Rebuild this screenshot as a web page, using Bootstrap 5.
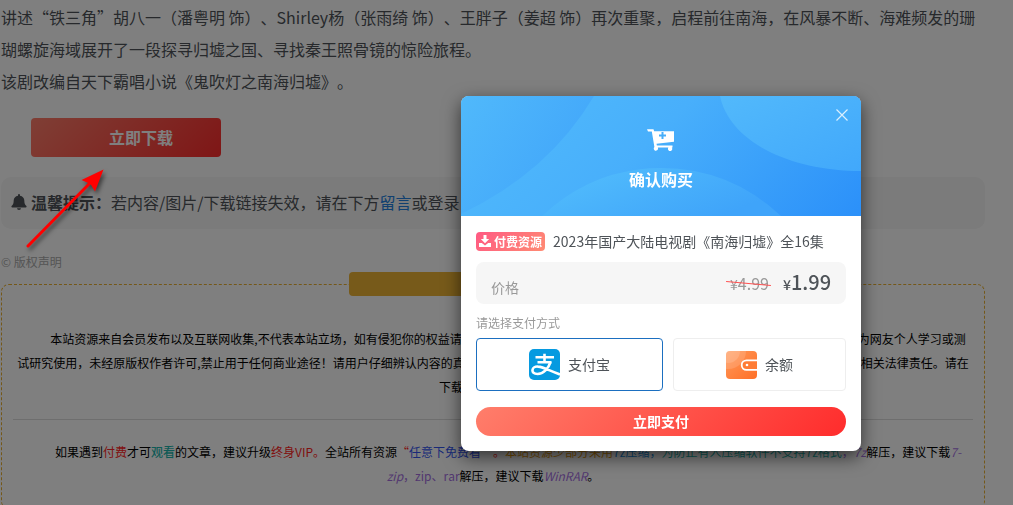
<!DOCTYPE html>
<html lang="zh-CN">
<head>
<meta charset="utf-8">
<meta name="viewport" content="width=device-width, initial-scale=1">
<title>确认购买</title>
<link href="https://cdn.jsdelivr.net/npm/bootstrap@5.3.0/dist/css/bootstrap.min.css" rel="stylesheet">
<style>
  body { font-family: "Noto Sans CJK SC", "Liberation Sans", sans-serif; color: #4e5358; background: #fff; text-spacing-trim: space-all; font-kerning: none; font-feature-settings: "chws" 0, "halt" 0; }
  a { text-decoration: none; }

  /* article */
  .article { padding: 1px 28px 0 1px; }
  .intro { line-height: 32px; margin-bottom: 21px; }
  .btn-download { width: 190px; height: 39px; margin-left: 30px; padding: 0 0 2px 30px; border: 0; border-radius: 4px; color: #fff; font-weight: 700; background: linear-gradient(135deg, #ff7e6b 0%, #ff2c2c 100%); }
  .btn-download:hover { color: #fff; }
  .tip-box { height: 52px; margin-top: 20px; padding: 0 10px 2px; border-radius: 10px; background: #f6f6f6; white-space: nowrap; overflow: hidden; }
  .tip-box a { color: #2280e0; }
  .tip-icon { width: 16px; height: 16px; margin-right: 4px; flex: none; }
  .copy-title { margin-top: 23px; font-size: 12px; line-height: 20px; color: #aaa; }
  .copy-box { position: relative; margin-top: 12px; padding: 42px 15px 20px; border: 1px dashed #eab030; border-radius: 8px; text-align: center; font-size: 12px; line-height: 24px; color: #000; }
  .copy-tag { position: absolute; top: -13px; left: 50%; width: 288px; height: 24px; margin-left: -144px; border-radius: 4px; background: #efb434; }
  .copy-box p { margin: 0; text-indent: 30px; }
  .copy-box hr { margin: 20px -4px; border-color: #ddd; opacity: 1; }
  .c-red { color: #f22; } .c-teal { color: #1fb5ac; } .c-blue { color: #3355f0; }
  .c-orange { color: #e69a12; } .c-sky { color: #1c8fe0; } .c-violet { color: #a56fdf; }

  /* purchase dialog */
  .pay-dialog { max-width: 400px; margin: 96px 15% 0 auto; }
  .pay-dialog .modal-content { border: 0; border-radius: 8px; overflow: hidden; color: #4e5358; box-shadow: 0 6px 18px rgba(0,0,0,.6); }
  .pay-head { position: relative; height: 120px; color: #fff; background: linear-gradient(135deg, #52bcfb 0%, #48affb 45%, #2b90f9 100%); }
  .head-waves { position: absolute; inset: 0; width: 100%; height: 100%; }
  .pay-head .btn-x { position: absolute; top: 9px; right: 9px; width: 20px; height: 20px; padding: 0; border: 0; background: none; color: #fff; line-height: 0; opacity: .8; }
  .cart-icon { margin: 31px 0 16px; }
  .pay-head h5 { margin: 0; font-size: 16px; line-height: 24px; font-weight: 700; }
  .pay-body { padding: 15px; }
  .pay-tag { height: 19px; padding: 0 3px; gap: 3px; border-radius: 4px; font-size: 12px; color: #fff; font-weight: 700; line-height: 19px; background: linear-gradient(135deg, #ff5983, #ff8b73); }
  .pay-name { font-size: 14px; line-height: 20px; }
  .price-box { height: 42px; margin-top: 11px; padding: 0 15px; border-radius: 8px; background: #f6f6f6; }
  .t-muted { color: #999; }
  .old-price { position: relative; font-size: 16px; text-decoration: none; }
  .old-price::after { content: ""; position: absolute; left: -4px; right: -2px; top: 50%; border-top: 1px solid #ff5050; transform: rotate(5deg); }
  .new-price { margin-left: 14px; font-size: 20px; font-weight: 500; line-height: 24px; }
  .yen { font-size: 14px; }
  .pay-hint { margin: 9px 0 5px; font-size: 12px; line-height: 20px; }
  .pay-way { height: 53px; gap: 8px; border: 1px solid #eee; border-radius: 4px; font-size: 14px; cursor: pointer; }
  .btn-check:checked + .pay-way { border-color: #1b6fc0; }
  .btn-pay { height: 29px; margin-top: 16px; padding: 0; border: 0; border-radius: 15px; color: #fff; font-size: 14px; font-weight: 700; background: linear-gradient(135deg, #ff7e6b 0%, #ff2c2c 100%); }
  .btn-pay:hover { color: #fff; }

  .pointer-arrow { position: fixed; left: 20px; top: 160px; width: 100px; height: 96px; z-index: 1070; pointer-events: none; filter: drop-shadow(2px 3px 2px rgba(0,0,0,.5)); }
</style>
</head>
<body class="modal-open overflow-hidden">

<main class="article">
  <div class="intro">讲述“铁三角”胡八一（潘粤明 饰）、Shirley杨（张雨绮 饰）、王胖子（姜超 饰）再次重聚，启程前往南海，在风暴不断、海难频发的珊瑚螺旋海域展开了一段探寻归墟之国、寻找秦王照骨镜的惊险旅程。<br>该剧改编自天下霸唱小说《鬼吹灯之南海归墟》。</div>

  <button type="button" class="btn btn-download d-block">立即下载</button>

  <div class="tip-box d-flex align-items-center">
    <svg class="tip-icon" viewBox="0 0 16 16" fill="currentColor" aria-hidden="true"><path d="M8 0a1 1 0 0 1 1 1v.7c2.600.5 4.300 2.300 4.300 4.800 0 3.200.8 4.300 1.900 5.300.8.8.3 1.700-.5 1.700H1.300c-.8 0-1.300-.9-.5-1.700 1.100-1 1.900-2.100 1.900-5.300C2.700 4 4.400 2.200 7 1.700V1a1 1 0 0 1 1-1zM6 14.200h4a2 1.800 0 0 1-4 0z"/></svg>
    <strong>温馨提示：</strong><span>若内容/图片/下载链接失效，请在下方<a href="#comment">留言</a>或登录</span>
  </div>

  <div class="copy-title">© 版权声明</div>
  <section class="copy-box">
    <div class="copy-tag"></div>
    <p>本站资源来自会员发布以及互联网收集,不代表本站立场，如有侵犯你的权益请联系我们，本站将第一时间进行删除处理。本站全部资源来自网络公开，仅为网友个人学习或测试研究使用，未经原版权作者许可,禁止用于任何商业途径！请用户仔细辨认内容的真实性，本站不对其内容承担任何保证，如因使用本站资源产生纠纷，须承担相关法律责任。请在下载后请及时删除。</p>
    <hr>
    <p>如果遇到<span class="c-red">付费</span>才可<b class="c-teal fw-medium">观看</b>的文章，建议升级<span class="c-red">终身VIP。</span>全站所有资源<span class="c-red">“</span><span class="c-blue">任意下免费看</span><span class="c-red">”。</span><span class="c-orange">本站资源少部分采用</span><span class="c-sky">7z压缩，</span><span class="c-teal">为防止有人压缩软件不支持7z格式</span><span class="c-violet">，<i>7z</i></span>解压，建议下载<i class="c-violet">7-</i><br><span class="c-violet"><i>zip</i>，zip、rar</span>解压，建议下载<i class="c-violet">WinRAR</i>。</p>
  </section>
</main>

<div class="modal-backdrop show"></div>
<div class="modal show d-block" tabindex="-1" role="dialog" aria-labelledby="payTitle">
  <div class="modal-dialog pay-dialog">
    <div class="modal-content">
      <div class="pay-head d-flex flex-column align-items-center">
        <svg class="head-waves" viewBox="0 0 400 120" preserveAspectRatio="none" aria-hidden="true">
          <defs>
            <linearGradient id="w1" x1="0" y1="0" x2="1" y2=".6"><stop offset="0" stop-color="#50b9fb"/><stop offset="1" stop-color="#41a5fa"/></linearGradient>
            <linearGradient id="w2" x1="0" y1="0" x2="1" y2=".5"><stop offset="0" stop-color="#54c0fc"/><stop offset="1" stop-color="#3fa4fa"/></linearGradient>
            <linearGradient id="w3" x1="0" y1="0" x2="1" y2="1"><stop offset="0" stop-color="#52b9fb"/><stop offset="1" stop-color="#41a8fb"/></linearGradient>
          </defs>
          <path d="M0 0H133Q88 76 0 118Z" fill="url(#w1)"/>
          <path d="M81 120Q132 72 200 72Q269 72 320 120Z" fill="url(#w2)"/>
          <path d="M259 0C268 44 326 75 400 75V0Z" fill="url(#w3)"/>
        </svg>
        <button type="button" class="btn-x" aria-label="关闭"><svg width="12" height="12" viewBox="0 0 12 12" stroke="currentColor" stroke-width="1.200" fill="none"><path d="M.5.5l11 11M11.500.5l-11 11"/></svg></button>
        <svg class="cart-icon position-relative flex-shrink-0" width="28" height="24" viewBox="0 0 28 24" aria-hidden="true"><path fill="#fff" d="M0 1.200h6.500l.6 2H27v10.600L9.500 15.800l.4 1.800h15.600v2H24.800a2.100 2.100 0 1 1-3.400 0H10.800a2.100 2.100 0 1 1-3.400-.5L4.800 3.400H1z" transform="translate(0 1)"/><path d="M15.500 5v7M12 8.500h7" stroke="#47aefa" stroke-width="2"/></svg>
        <h5 class="position-relative" id="payTitle">确认购买</h5>
      </div>
      <div class="pay-body">
        <div class="d-flex align-items-center">
          <span class="pay-tag d-inline-flex align-items-center"><svg width="12" height="12" viewBox="0 0 12 12" fill="currentColor" aria-hidden="true"><path d="M4.500 0h3v4h2.700L6 8.200 1.800 4h2.700zM0 8h2.800L6 10.500 9.200 8H12v4H0z"/></svg>付费资源</span>
          <span class="pay-name ms-2">2023年国产大陆电视剧《南海归墟》全16集</span>
        </div>
        <div class="price-box d-flex align-items-center">
          <span class="t-muted pay-name pt-2">价格</span>
          <del class="old-price t-muted ms-auto"><span class="yen">¥</span>4.99</del>
          <span class="new-price"><span class="yen">¥</span>1.99</span>
        </div>
        <div class="pay-hint t-muted">请选择支付方式</div>
        <div class="d-flex">
          <input type="radio" class="btn-check" name="pay" id="payAli" checked>
          <label class="pay-way d-flex flex-grow-1 align-items-center justify-content-center" for="payAli">
            <svg width="31" height="31" viewBox="0 0 31 31" aria-hidden="true"><rect width="31" height="31" rx="5" fill="#069ae0"/><g fill="none" stroke="#fff"><path stroke-width="2.600" d="M15.500 4.800v8M6.500 8.300H25M8.500 13.300H22.500"/><path stroke-width="2.600" d="M21.500 13c-2 6.500-7 12-13 12-3.700 0-5.300-1.800-5-4 .3-2.300 2.700-3.700 5.600-3.400C14.500 18 21 22 31 25.500"/></g></svg>
            支付宝
          </label>
          <input type="radio" class="btn-check" name="pay" id="payBalance">
          <label class="pay-way d-flex flex-grow-1 align-items-center justify-content-center" for="payBalance" style="margin-left:10px">
            <svg width="31" height="28" viewBox="0 0 31 28" aria-hidden="true"><defs><linearGradient id="wal" x1="0" y1="0" x2="1" y2="1"><stop offset="0" stop-color="#ff9a5c"/><stop offset="1" stop-color="#ff6f26"/></linearGradient><clipPath id="walClip"><rect width="31" height="28" rx="4"/></clipPath></defs><g clip-path="url(#walClip)"><rect width="31" height="28" fill="url(#wal)"/><circle cx="2" cy="0" r="18" fill="#fff" opacity=".14"/><circle cx="2" cy="0" r="12" fill="#fff" opacity=".14"/><path d="M32 9.300H20.500a4.800 4.800 0 0 0 0 9.600H32" fill="#ff7c35" stroke="#fff" stroke-width="1.800"/><circle cx="21" cy="14" r="1.300" fill="#fff"/></g></svg>
            余额
          </label>
        </div>
        <button type="button" class="btn btn-pay w-100 d-block">立即支付</button>
      </div>
    </div>
  </div>
</div>

<svg class="pointer-arrow" viewBox="0 0 100 96" aria-hidden="true"><path d="M8 86L72 21" stroke="#f00" stroke-width="3" stroke-linecap="round"/><path d="M83.500 9.500L75 31.500 70.500 24 61.500 20z" fill="#f00"/></svg>

<script src="https://cdn.jsdelivr.net/npm/bootstrap@5.3.0/dist/js/bootstrap.bundle.min.js"></script>
</body>
</html>
